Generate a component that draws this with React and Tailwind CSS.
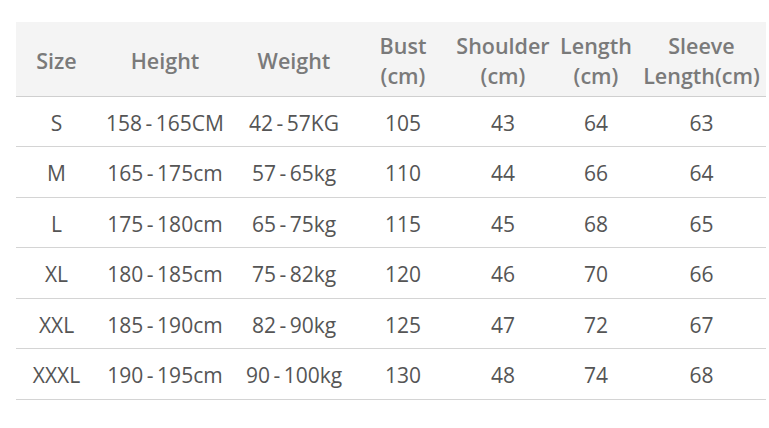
import React from "react";

const cols = "grid grid-cols-[81px_136px_122px_96px_104px_82px_129px]";

const headers = [
  ["Size"],
  ["Height"],
  ["Weight"],
  ["Bust", "(cm)"],
  ["Shoulder", "(cm)"],
  ["Length", "(cm)"],
  ["Sleeve", "Length(cm)"],
];

const rows = [
  ["S", "158-165CM", "42-57KG", "105", "43", "64", "63"],
  ["M", "165-175cm", "57-65kg", "110", "44", "66", "64"],
  ["L", "175-180cm", "65-75kg", "115", "45", "68", "65"],
  ["XL", "180-185cm", "75-82kg", "120", "46", "70", "66"],
  ["XXL", "185-190cm", "82-90kg", "125", "47", "72", "67"],
  ["XXXL", "190-195cm", "90-100kg", "130", "48", "74", "68"],
];

function fmt(t) {
  return t.replace(/-/g, "\u2009-\u2009");
}

export default function App() {
  return (
    <div className="w-[769px] h-[428px] bg-white pt-[22px] pl-[16px] font-['Open_Sans',sans-serif]">
      <div className="w-[750px]">
        <div className={`${cols} h-[74.5px] bg-[#f4f4f4] border-b-[1.5px] border-[#cfcfcf]`}>
          {headers.map((h, i) => (
            <div
              key={i}
              className="flex flex-col items-center justify-center pt-[5px] text-[21.5px] leading-[30px] font-semibold text-[#7a7a7a] whitespace-nowrap"
            >
              {h.map((l, j) => (
                <span key={j}>{l}</span>
              ))}
            </div>
          ))}
        </div>
        {rows.map((r, i) => (
          <div key={i} className={`${cols} h-[50.5px] border-b-[1.5px] border-[#d4d4d4]`}>
            {r.map((c, j) => (
              <div
                key={j}
                className="flex items-center justify-center pt-[4px] text-[21px] text-[#555555] whitespace-nowrap"
              >
                {fmt(c)}
              </div>
            ))}
          </div>
        ))}
      </div>
    </div>
  );
}
